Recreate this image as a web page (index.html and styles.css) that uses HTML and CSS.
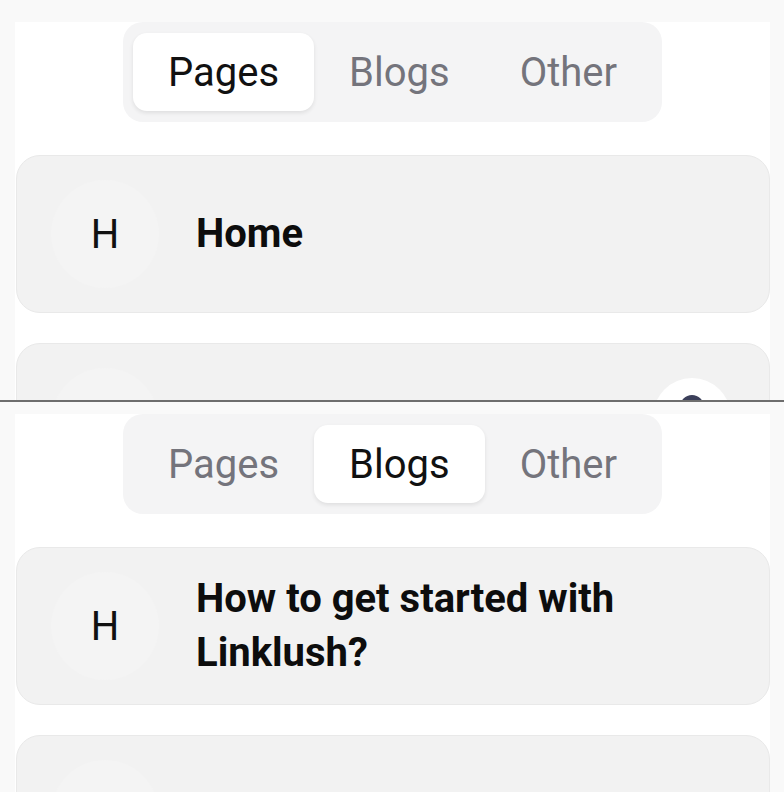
FILE: index.html
```html
<!DOCTYPE html>
<html lang="en">
<head>
<meta charset="utf-8">
<title>Linklush tabs</title>
<link rel="stylesheet" href="styles.css">
</head>
<body>
<div class="shot shot-top">
  <div class="panel">
    <div class="tabs-wrap">
      <nav class="tabs">
        <span class="tab active">Pages</span>
        <span class="tab">Blogs</span>
        <span class="tab">Other</span>
      </nav>
    </div>
    <div class="list">
      <div class="card">
        <div class="avatar">H</div>
        <div class="title">Home</div>
      </div>
      <div class="card">
        <div class="avatar"></div>
        <div class="title"></div>
      </div>
    </div>
  </div>
  <div class="fab"><span class="fab-icon"></span></div>
</div>
<div class="divider"></div>
<div class="shot shot-bottom">
  <div class="panel">
    <div class="tabs-wrap">
      <nav class="tabs">
        <span class="tab">Pages</span>
        <span class="tab active">Blogs</span>
        <span class="tab">Other</span>
      </nav>
    </div>
    <div class="list">
      <div class="card">
        <div class="avatar">H</div>
        <div class="title title-wrap">How to get started with Linklush?</div>
      </div>
      <div class="card">
        <div class="avatar"></div>
        <div class="title"></div>
      </div>
    </div>
  </div>
</div>
</body>
</html>
```
FILE: styles.css
```css
html, body {
  margin: 0;
  padding: 0;
}
body {
  width: 784px;
  background: #f9f9f9;
  font-family: Roboto, "Liberation Sans", Arial, sans-serif;
  color: #111111;
}
.shot {
  position: relative;
  overflow: hidden;
  background: #f9f9f9;
  box-sizing: border-box;
}
.shot-top {
  height: 400px;
  padding-top: 22px;
}
.shot-bottom {
  height: 390px;
  padding-top: 12px;
}
.divider {
  height: 2px;
  background: #6e6e6e;
}
.panel {
  margin-left: 15px;
  width: 755px;
  background: #ffffff;
  min-height: 100%;
  padding-bottom: 200px;
}
.tabs-wrap {
  display: flex;
  justify-content: center;
}
.tabs {
  display: flex;
  padding: 11px 10px;
  background: #f4f4f5;
  border-radius: 20px;
}
.tab {
  height: 78px;
  padding: 0 35px;
  display: flex;
  align-items: center;
  font-size: 40px;
  color: #74747c;
  border-radius: 14px;
}
.tab.active {
  background: #ffffff;
  color: #111111;
  box-shadow: 0 2px 4px rgba(0, 0, 0, 0.09);
}
.list {
  display: flex;
  flex-direction: column;
  gap: 30px;
  margin-top: 33px;
  margin-left: 1px;
}
.card {
  display: flex;
  align-items: center;
  gap: 37px;
  padding: 24px 34px;
  min-height: 108px;
  background: #f2f2f2;
  border: 1px solid #e9e9e9;
  border-radius: 24px;
}
.avatar {
  flex: none;
  width: 108px;
  height: 108px;
  border-radius: 50%;
  background: #f4f4f4;
  display: flex;
  align-items: center;
  justify-content: center;
  font-size: 40px;
  font-weight: 400;
  color: #111111;
}
.title {
  font-size: 40px;
  font-weight: 700;
  line-height: 54px;
  color: #0d0d0d;
}
.title-wrap {
  max-width: 440px;
}
.fab {
  position: absolute;
  left: 653px;
  top: 378px;
  width: 78px;
  height: 78px;
  border-radius: 50%;
  background: #ffffff;
}
.fab-icon {
  position: absolute;
  left: 27px;
  top: 17px;
  width: 24px;
  height: 24px;
  border-radius: 50%;
  background: #3b3f5a;
}
```
